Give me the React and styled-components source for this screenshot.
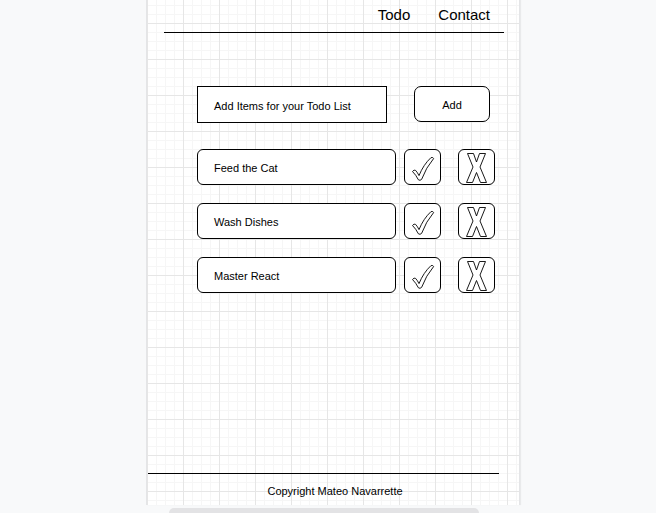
import React from 'react';
import styled, { createGlobalStyle } from 'styled-components';

const GlobalStyle = createGlobalStyle`
  html, body {
    margin: 0;
    padding: 0;
    background: #f8f9fa;
    font-family: "Liberation Sans", Helvetica, Arial, sans-serif;
    color: #000;
    overflow: hidden;
  }
  * {
    box-sizing: border-box;
  }
`;

const Canvas = styled.div`
  width: 656px;
  height: 513px;
  padding-left: 146px;
  overflow: hidden;
`;

const Page = styled.div`
  width: 374px;
  height: 505px;
  display: flex;
  flex-direction: column;
  border-left: 1px solid #e4e5e7;
  border-right: 1px solid #e4e5e7;
  box-shadow: 1px 0 1px rgba(0, 0, 0, 0.06);
  background-color: #fff;
  background-image:
    linear-gradient(#e6e6e6 1px, transparent 1px),
    linear-gradient(90deg, #e6e6e6 1px, transparent 1px),
    linear-gradient(#f6f6f6 1px, transparent 1px),
    linear-gradient(90deg, #f6f6f6 1px, transparent 1px);
  background-size: 36px 36px, 36px 36px, 9px 9px, 9px 9px;
  background-position: 0 23px, 0 0, 0 5px, 0 0;
`;

const Header = styled.header`
  height: 33px;
  margin: 0 15px 0 17px;
  border-bottom: 1px solid #000;
`;

const Nav = styled.nav`
  display: flex;
  justify-content: flex-end;
  gap: 28px;
  padding: 6px 14px 0 0;
`;

const NavLink = styled.span`
  font-size: 15px;
  line-height: 18px;
`;

const Form = styled.div`
  display: flex;
  align-items: flex-start;
  gap: 27px;
  margin-top: 53px;
  padding-left: 50px;
`;

const Input = styled.div`
  display: flex;
  align-items: center;
  width: 190px;
  height: 37px;
  padding: 2px 0 0 16px;
  border: 1px solid #000;
  background: #fff;
  font-size: 11px;
`;

const AddButton = styled.div`
  display: flex;
  align-items: center;
  justify-content: center;
  width: 76px;
  height: 36px;
  padding-top: 2px;
  border: 1px solid #000;
  border-radius: 7px;
  background: #fff;
  font-size: 11px;
`;

const List = styled.ul`
  list-style: none;
  margin: 26px 0 0;
  padding: 0 0 0 50px;
  display: flex;
  flex-direction: column;
  gap: 18px;
`;

const Row = styled.li`
  display: flex;
  align-items: center;
`;

const Item = styled.div`
  display: flex;
  align-items: center;
  width: 199px;
  height: 36px;
  padding: 1px 0 0 16px;
  border: 1px solid #000;
  border-radius: 6px;
  background: #fff;
  font-size: 11px;
`;

const IconBox = styled.div`
  width: 37px;
  height: 36px;
  margin-left: ${(p) => p.$gap}px;
  border: 1px solid #000;
  border-radius: 6px;
  background: #fff;
  display: flex;

  svg {
    display: block;
  }
`;

const Footer = styled.footer`
  margin-top: auto;
  padding-bottom: 7px;
`;

const FooterLine = styled.div`
  width: 351px;
  margin-left: 1px;
  border-top: 1px solid #000;
`;

const Copy = styled.p`
  margin: 11px 0 0;
  padding-left: 4px;
  text-align: center;
  font-size: 11px;
  line-height: 13px;
`;

const ScrollThumb = styled.div`
  width: 310px;
  height: 10px;
  margin: 3px 0 0 23px;
  border-radius: 5px;
  background: #e3e3e5;
`;

const CheckIcon = () => (
  <svg width="35" height="34" viewBox="0 0 35 34">
    <path
      d="M7.5 21.5 Q9 19.3 10.6 20.4 Q12.6 22.6 14 25.6 Q18.5 14.5 26 7.6 Q28.2 7 28.6 8.6 Q21 17.5 16.6 29.4 Q15 31 13.4 29.8 Q11 25 7.5 21.5 Z"
      fill="#fff"
      stroke="#000"
      strokeWidth="0.9"
      strokeLinejoin="round"
    />
  </svg>
);

const CrossIcon = () => (
  <svg width="35" height="34" viewBox="0 0 35 34">
    <path
      d="M8.5 3.5 L14.5 3.5 L17.5 12 L20.5 3.5 L26.5 3.5 L21 17 L27.5 32.5 L21.5 32.5 L17.5 22.5 L13.5 32.5 L7.5 32.5 L14 17 Z"
      fill="#fff"
      stroke="#000"
      strokeWidth="0.9"
      strokeLinejoin="round"
    />
  </svg>
);

const todos = ['Feed the Cat', 'Wash Dishes', 'Master React'];

const App = () => {
  return (
    <>
      <GlobalStyle />
      <Canvas>
        <Page>
          <Header>
            <Nav>
              <NavLink>Todo</NavLink>
              <NavLink>Contact</NavLink>
            </Nav>
          </Header>

          <Form>
            <Input>Add Items for your Todo List</Input>
            <AddButton>Add</AddButton>
          </Form>

          <List>
            {todos.map((todo) => (
              <Row key={todo}>
                <Item>{todo}</Item>
                <IconBox $gap={8}>
                  <CheckIcon />
                </IconBox>
                <IconBox $gap={17}>
                  <CrossIcon />
                </IconBox>
              </Row>
            ))}
          </List>

          <Footer>
            <FooterLine />
            <Copy>Copyright Mateo Navarrette</Copy>
          </Footer>
        </Page>
        <ScrollThumb />
      </Canvas>
    </>
  );
};

export default App;
